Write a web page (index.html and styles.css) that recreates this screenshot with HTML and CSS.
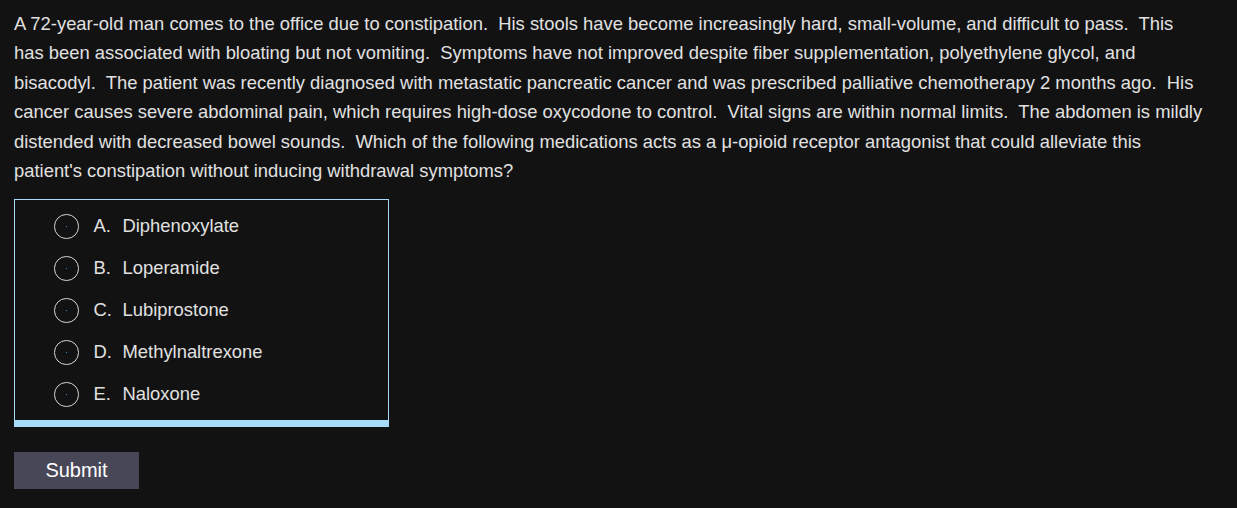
FILE: index.html
```html
<!DOCTYPE html>
<html>
<head>
<meta charset="utf-8">
<link rel="stylesheet" href="styles.css">
</head>
<body>
<div class="page">
  <p class="stem">A 72-year-old man comes to the office due to constipation.&nbsp; His stools have become increasingly hard, small-volume, and difficult to pass.&nbsp; This has been associated with bloating but not vomiting.&nbsp; Symptoms have not improved despite fiber supplementation, polyethylene glycol, and bisacodyl.&nbsp; The patient was recently diagnosed with metastatic pancreatic cancer and was prescribed palliative chemotherapy 2 months ago.&nbsp; His cancer causes severe abdominal pain, which requires high-dose oxycodone to control.&nbsp; Vital signs are within normal limits.&nbsp; The abdomen is mildly distended with decreased bowel sounds.&nbsp; Which of the following medications acts as a μ-opioid receptor antagonist that could alleviate this patient's constipation without inducing withdrawal symptoms?</p>
  <div class="choices">
    <label class="choice"><span class="radio"><span class="dot"></span></span><span class="letter">A.</span><span class="text">Diphenoxylate</span></label>
    <label class="choice"><span class="radio"><span class="dot"></span></span><span class="letter">B.</span><span class="text">Loperamide</span></label>
    <label class="choice"><span class="radio"><span class="dot"></span></span><span class="letter">C.</span><span class="text">Lubiprostone</span></label>
    <label class="choice"><span class="radio"><span class="dot"></span></span><span class="letter">D.</span><span class="text">Methylnaltrexone</span></label>
    <label class="choice"><span class="radio"><span class="dot"></span></span><span class="letter">E.</span><span class="text">Naloxone</span></label>
  </div>
  <button class="submit">Submit</button>
</div>
</body>
</html>
```
FILE: styles.css
```css
html, body {
  margin: 0;
  padding: 0;
  background: #121212;
}
body {
  font-family: "Liberation Sans", Arial, sans-serif;
  color: #e1e1e1;
}
.page {
  padding: 9px 14px 0 14px;
}
.stem {
  margin: 0;
  font-size: 18.4px;
  line-height: 29.4px;
  max-width: 1192px;
}
.choices {
  margin-top: 14px;
  width: 373px;
  border: 1px solid #a6dcf9;
  border-bottom: 7px solid #a6dcf9;
  padding: 5px 0 5px 0;
  display: flex;
  flex-direction: column;
}
.choice {
  display: flex;
  align-items: center;
  height: 42px;
  font-size: 18.4px;
}
.radio {
  margin-left: 39px;
  width: 22.5px;
  height: 22.5px;
  border: 1.4px solid #d6d6d6;
  border-radius: 50%;
  display: flex;
  align-items: center;
  justify-content: center;
}
.dot {
  width: 1px;
  height: 1px;
  background: #2f8fd0;
}
.letter {
  margin-left: 15px;
  width: 29px;
}
.submit {
  margin-top: 25px;
  width: 125px;
  height: 37px;
  background: #484758;
  color: #ffffff;
  border: none;
  font-family: "Liberation Sans", Arial, sans-serif;
  font-size: 20px;
  padding: 0;
  display: block;
}
```
